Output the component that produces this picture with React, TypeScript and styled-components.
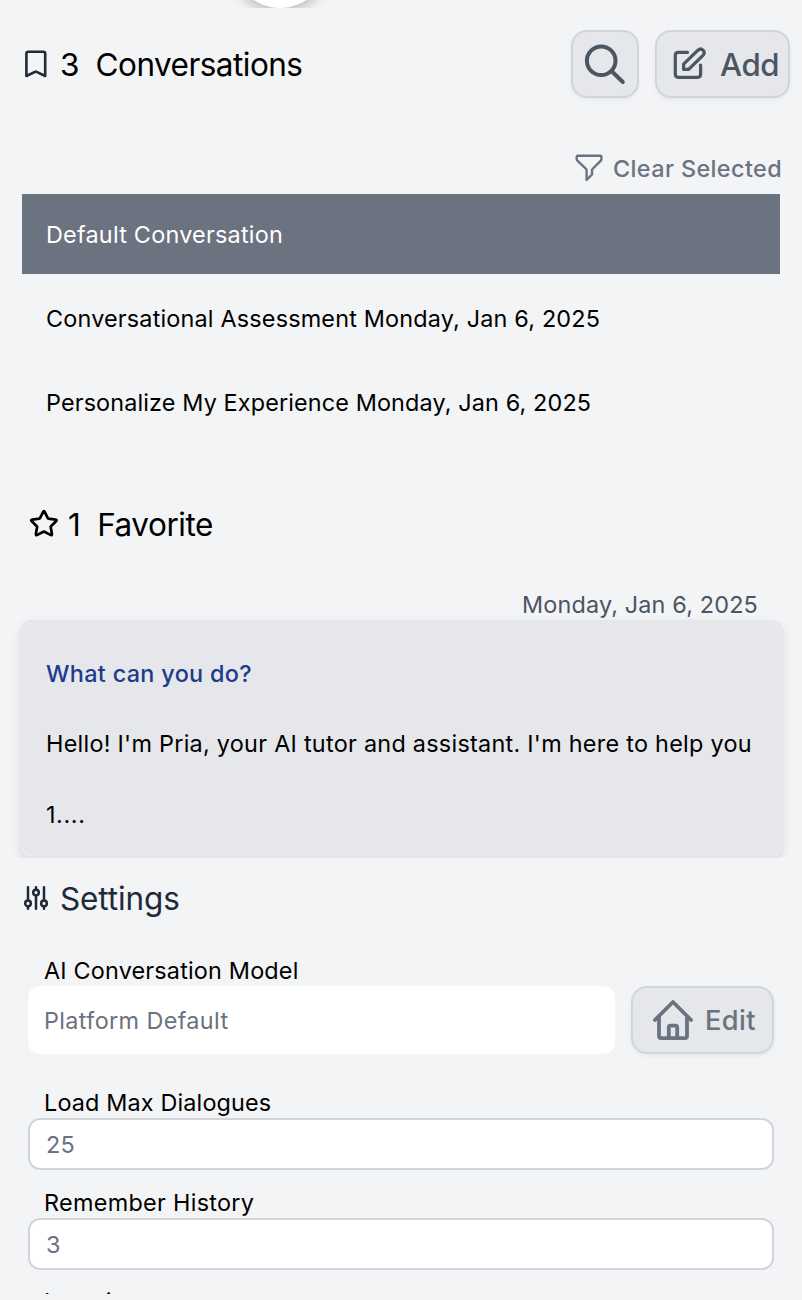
import React from "react";
import styled, { createGlobalStyle } from "styled-components";

const GlobalStyle = createGlobalStyle`
  * { box-sizing: border-box; }
  body {
    margin: 0;
    background: #f3f4f6;
    font-family: Inter, "Liberation Sans", sans-serif;
    color: #000;
  }
`;

const Page = styled.main`
  width: 802px;
  height: 1300px;
  overflow: hidden;
  display: flex;
  flex-direction: column;
  background: #f3f4f6;
`;

const AvatarStrip = styled.div`
  height: 8px;
  flex: none;
  overflow: hidden;
  display: flex;
  align-items: flex-end;
  padding-left: 232px;
`;

const Avatar = styled.div`
  width: 96px;
  height: 96px;
  flex: none;
  border-radius: 50%;
  background: #fff;
  box-shadow: 0 4px 14px rgba(0, 0, 0, 0.24);
`;

const Text = styled.span<{ $size?: number; $track?: number; $weight?: number; $color?: string }>`
  display: block;
  padding-top: 2px;
  font-size: ${(p) => p.$size ?? 23.4}px;
  letter-spacing: ${(p) => p.$track ?? 0}px;
  font-weight: ${(p) => p.$weight ?? 400};
  color: ${(p) => p.$color ?? "inherit"};
  line-height: 1.25;
  white-space: pre;
`;

const Header = styled.header`
  display: flex;
  align-items: center;
  flex: none;
  height: 68px;
  margin-top: 22px;
  padding: 0 12px 0 24px;
`;

const Title = styled.h2<{ $gap: number }>`
  display: flex;
  align-items: center;
  flex: none;
  gap: ${(p) => p.$gap}px;
  margin: 0;
  font-weight: 400;
`;

const Actions = styled.div`
  display: flex;
  gap: 16px;
  margin-left: auto;
`;

const Button = styled.button<{ $width: number; $pad: number; $gap: number; $color: string }>`
  display: flex;
  align-items: center;
  flex: none;
  gap: ${(p) => p.$gap}px;
  width: ${(p) => p.$width}px;
  height: 68px;
  padding: 0 0 0 ${(p) => p.$pad}px;
  border: 2px solid #d1d5db;
  border-radius: 16px;
  background: #e5e7eb;
  box-shadow: 0 2px 4px rgba(0, 0, 0, 0.05);
  color: ${(p) => p.$color};
  font-family: inherit;
`;

const ClearRow = styled.div`
  display: flex;
  align-items: center;
  justify-content: flex-end;
  flex: none;
  gap: 10px;
  height: 52px;
  margin-top: 44px;
  padding-right: 20px;
  color: #6b7280;
`;

const List = styled.ul`
  display: flex;
  flex-direction: column;
  flex: none;
  gap: 4px;
  margin: 0 22px;
  padding: 0;
  list-style: none;
`;

const Item = styled.li<{ $active?: boolean }>`
  display: flex;
  align-items: center;
  height: 80px;
  padding-left: 24px;
  background: ${(p) => (p.$active ? "#6b7280" : "transparent")};
  color: ${(p) => (p.$active ? "#fff" : "#000")};
`;

const FavoriteHeader = styled.header`
  display: flex;
  align-items: center;
  flex: none;
  height: 60px;
  margin-top: 52px;
  padding-left: 29px;
`;

const Favorites = styled.section`
  flex: none;
  height: 304px;
  overflow: hidden;
  display: flex;
  flex-direction: column;
`;

const DateLine = styled.div`
  display: flex;
  justify-content: flex-end;
  align-items: center;
  flex: none;
  height: 32px;
  margin-top: 34px;
  padding-right: 44px;
`;

const arc = (x: string, y: string) =>
  `radial-gradient(circle at ${x} ${y}, transparent 9.4px, #f0f1f3 10px, transparent 10.8px)`;

const Card = styled.article`
  display: flex;
  flex-direction: column;
  flex: none;
  height: 238px;
  margin: 0 19px 0 20px;
  padding: 18px 0 0 26px;
  border-radius: 12px;
  background-color: #e5e7eb;
  background-image: ${arc("100%", "100%")}, ${arc("0", "100%")}, ${arc("100%", "0")}, ${arc("0", "0")};
  background-size: 11px 11px;
  background-repeat: no-repeat;
  background-position: left 2px top 2px, right 2px top 2px, left 2px bottom 1px, right 2px bottom 1px;
  box-shadow: 0 4px 10px rgba(0, 0, 0, 0.1);
`;

const CardLine = styled.p`
  display: flex;
  align-items: center;
  height: 71px;
  margin: 0;
`;

const QuestionLine = styled(CardLine)`
  height: 69px;
`;

const Settings = styled.section`
  display: flex;
  flex-direction: column;
  flex: none;
  height: 436px;
  overflow: hidden;
`;

const SettingsTitle = styled(Title)`
  height: 80px;
  padding-left: 24px;
  color: #1f2937;
`;

const Field = styled.div<{ $top: number }>`
  display: flex;
  flex-direction: column;
  flex: none;
  margin: ${(p) => p.$top}px 28px 0;
`;

const Label = styled.label`
  display: flex;
  align-items: center;
  height: 32px;
  padding-left: 16px;
`;

const FieldRow = styled.div`
  display: flex;
  gap: 16px;
`;

const ModelBox = styled.div`
  display: flex;
  align-items: center;
  width: 587px;
  height: 68px;
  padding-left: 16px;
  border-radius: 12px;
  background: #fff;
`;

const NumberBox = styled.div`
  display: flex;
  align-items: center;
  height: 52px;
  padding-left: 16px;
  border: 2px solid #d1d5db;
  border-radius: 12px;
  background: #fff;
`;

const Icon = styled.svg`
  display: block;
  flex: none;
  fill: none;
  stroke: currentColor;
  stroke-linecap: round;
  stroke-linejoin: round;
`;

const BookmarkIcon = () => (
  <Icon width="24" height="30" viewBox="0 0 24 30" color="#1f2937" strokeWidth="2.6">
    <path d="M2.4 27V4.6Q2.4 2.7 4.3 2.7H19.3Q21.2 2.7 21.2 4.6V27L12.6 22.8Q11.8 22.4 11 22.8Z" />
  </Icon>
);

const SearchIcon = () => (
  <Icon width="42" height="42" viewBox="0 0 42 42" strokeWidth="4">
    <circle cx="17.2" cy="17.8" r="14.3" />
    <path d="M27.7 28.3L38.8 39" />
  </Icon>
);

const EditIcon = () => (
  <Icon width="34" height="34" viewBox="0 0 34 34" strokeWidth="3.2">
    <path d="M14.5 5.3H5.3Q2.3 5.3 2.3 8.3V27.3Q2.3 30.3 5.3 30.3H24.6Q27.6 30.3 27.6 27.3V18" />
    <path d="M10.6 22.3V17.2L25 3.2Q27.6 0.8 30.2 3.3Q32.4 5.8 30 8.3L15.6 22.3Z" />
  </Icon>
);

const FilterIcon = () => (
  <Icon width="28" height="28" viewBox="0 0 28 28" strokeWidth="2.4">
    <path d="M2.7 1.7H25.3Q26.4 1.7 26.4 2.8V5.2Q26.4 6 25.8 6.6L17.5 15Q17 15.5 17 16.3V20.5L11.6 26V16.3Q11.6 15.5 11 14.9L2.4 6.7Q1.7 6 1.7 5.2V2.8Q1.7 1.7 2.7 1.7Z" />
  </Icon>
);

const StarIcon = () => (
  <Icon width="30" height="30" viewBox="0 0.6 30 30" color="#000" strokeWidth="2.7">
    <path d="M14 3.7Q14.9 1.9 15.8 3.7L18.8 9.7Q19 10.1 19.5 10.2L26.5 11.2Q28.4 11.5 27 12.9L22 17.8Q21.6 18.2 21.7 18.8L22.9 25.4Q23.2 27.4 21.4 26.5L15.5 23.4Q14.9 23.1 14.3 23.4L8.4 26.5Q6.6 27.4 6.9 25.4L8.1 18.8Q8.2 18.2 7.8 17.8L2.8 12.9Q1.4 11.5 3.3 11.2L10.3 10.2Q10.8 10.1 11 9.7Z" />
  </Icon>
);

const SlidersIcon = () => (
  <Icon width="24" height="24" viewBox="0 0 24 24" strokeWidth="2.5">
    <path d="M4 1.3V14M4 20.8V22.7M12 1.3V3.2M12 10V22.7M20 1.3V14M20 20.8V22.7" />
    <circle cx="4" cy="17.4" r="2.8" />
    <circle cx="12" cy="6.6" r="2.8" />
    <circle cx="20" cy="17.4" r="2.8" />
  </Icon>
);

const HomeIcon = () => (
  <Icon width="40" height="40" viewBox="0 0 40 40" strokeWidth="3.8">
    <path d="M1.9 20L20 2L38.1 20" />
    <path d="M6 17V36Q6 38.1 8 38.1H32Q34 38.1 34 36V17" />
    <path d="M15.8 38V27.5Q15.8 25.7 17.5 25.7H22.5Q24.2 25.7 24.2 27.5V38" />
  </Icon>
);

export default function App() {
  return (
    <Page>
      <GlobalStyle />
      <AvatarStrip>
        <Avatar />
      </AvatarStrip>

      <Header>
        <Title $gap={12}>
          <BookmarkIcon />
          <Text $size={31.5} $track={-0.53}>{"3  Conversations"}</Text>
        </Title>
        <Actions>
          <Button $width={68} $pad={11} $gap={0} $color="#4b5563" aria-label="Search">
            <SearchIcon />
          </Button>
          <Button $width={135} $pad={16} $gap={13} $color="#4b5563">
            <EditIcon />
            <Text $size={31.2} $track={-0.4} $weight={500}>Add</Text>
          </Button>
        </Actions>
      </Header>

      <ClearRow>
        <FilterIcon />
        <Text $track={0.39} $weight={500}>Clear Selected</Text>
      </ClearRow>

      <List>
        <Item $active>
          <Text $track={0.23}>Default Conversation</Text>
        </Item>
        <Item>
          <Text $track={0.18}>Conversational Assessment Monday, Jan 6, 2025</Text>
        </Item>
        <Item>
          <Text $track={0.13}>Personalize My Experience Monday, Jan 6, 2025</Text>
        </Item>
      </List>

      <FavoriteHeader>
        <Title $gap={9}>
          <StarIcon />
          <Text $size={31.5} $track={-0.45}>{"1  Favorite"}</Text>
        </Title>
      </FavoriteHeader>

      <Favorites>
        <DateLine>
          <Text $track={0.16} $color="#4b5563">Monday, Jan 6, 2025</Text>
        </DateLine>
        <Card>
          <QuestionLine>
            <Text $track={0.33} $weight={500} $color="#1e3a8a">What can you do?</Text>
          </QuestionLine>
          <CardLine>
            <Text $track={0.27}>Hello! I'm Pria, your AI tutor and assistant. I'm here to help you</Text>
          </CardLine>
          <CardLine>
            <Text $track={0.6}>1....</Text>
          </CardLine>
        </Card>
      </Favorites>

      <Settings>
        <SettingsTitle $gap={12}>
          <SlidersIcon />
          <Text $size={31.5} $track={-0.12}>Settings</Text>
        </SettingsTitle>
        <Field $top={16}>
          <Label>
            <Text $track={0.18}>AI Conversation Model</Text>
          </Label>
          <FieldRow>
            <ModelBox>
              <Text $track={0.37} $color="#6b7280">Platform Default</Text>
            </ModelBox>
            <Button $width={143} $pad={20} $gap={12} $color="#6b7280">
              <HomeIcon />
              <Text $size={27.2} $track={0.4} $weight={500}>Edit</Text>
            </Button>
          </FieldRow>
        </Field>
        <Field $top={32}>
          <Label>
            <Text $track={0.15}>Load Max Dialogues</Text>
          </Label>
          <NumberBox>
            <Text $track={0.3} $color="#6b7280">25</Text>
          </NumberBox>
        </Field>
        <Field $top={16}>
          <Label>
            <Text $track={0.3}>Remember History</Text>
          </Label>
          <NumberBox>
            <Text $color="#6b7280">3</Text>
          </NumberBox>
        </Field>
        <Field $top={15}>
          <Label>
            <Text>Location</Text>
          </Label>
        </Field>
      </Settings>
    </Page>
  );
}
